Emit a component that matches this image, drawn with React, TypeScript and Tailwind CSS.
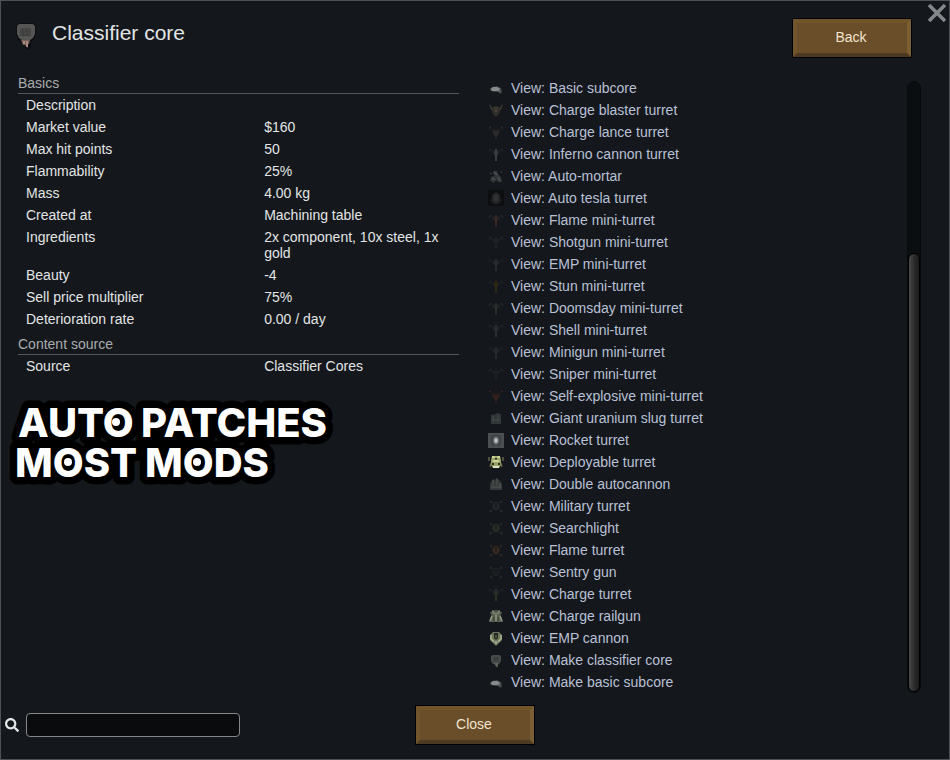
import { useState } from 'react';
import type { ReactNode } from 'react';
import { FaSearch } from 'react-icons/fa';

type Shape =
  | 'subcore' | 'core' | 'blaster' | 'lance' | 'mini' | 'mortar' | 'tesla' | 'slug'
  | 'rocket' | 'deployable' | 'autocannon' | 'quad' | 'railgun' | 'emp';

type Item = { label: string; shape: Shape; tint?: string };

const stats = [
  { label: 'Description', value: '' },
  { label: 'Market value', value: '$160' },
  { label: 'Max hit points', value: '50' },
  { label: 'Flammability', value: '25%' },
  { label: 'Mass', value: '4.00 kg' },
  { label: 'Created at', value: 'Machining table' },
  { label: 'Ingredients', value: '2x component, 10x steel, 1x gold' },
  { label: 'Beauty', value: '-4' },
  { label: 'Sell price multiplier', value: '75%' },
  { label: 'Deterioration rate', value: '0.00 / day' },
];

const items: Item[] = [
  { label: 'Basic subcore', shape: 'subcore' },
  { label: 'Charge blaster turret', shape: 'blaster' },
  { label: 'Charge lance turret', shape: 'lance', tint: '#2c2b2a' },
  { label: 'Inferno cannon turret', shape: 'mini', tint: '#3a3e3e' },
  { label: 'Auto-mortar', shape: 'mortar' },
  { label: 'Auto tesla turret', shape: 'tesla' },
  { label: 'Flame mini-turret', shape: 'mini', tint: '#332623' },
  { label: 'Shotgun mini-turret', shape: 'mini', tint: '#1f2224' },
  { label: 'EMP mini-turret', shape: 'mini', tint: '#272c2f' },
  { label: 'Stun mini-turret', shape: 'mini', tint: '#2c2813' },
  { label: 'Doomsday mini-turret', shape: 'mini', tint: '#292b2a' },
  { label: 'Shell mini-turret', shape: 'mini', tint: '#292d2f' },
  { label: 'Minigun mini-turret', shape: 'mini', tint: '#272a2b' },
  { label: 'Sniper mini-turret', shape: 'mini', tint: '#1c2022' },
  { label: 'Self-explosive mini-turret', shape: 'lance', tint: '#352020' },
  { label: 'Giant uranium slug turret', shape: 'slug' },
  { label: 'Rocket turret', shape: 'rocket' },
  { label: 'Deployable turret', shape: 'deployable' },
  { label: 'Double autocannon', shape: 'autocannon' },
  { label: 'Military turret', shape: 'quad', tint: '#232729' },
  { label: 'Searchlight', shape: 'quad', tint: '#2b2a26' },
  { label: 'Flame turret', shape: 'quad', tint: '#35271d' },
  { label: 'Sentry gun', shape: 'quad', tint: '#1d2022' },
  { label: 'Charge turret', shape: 'mini', tint: '#2b2e28' },
  { label: 'Charge railgun', shape: 'railgun' },
  { label: 'EMP cannon', shape: 'emp' },
  { label: 'Make classifier core', shape: 'core' },
  { label: 'Make basic subcore', shape: 'subcore' },
];

function drawShape(shape: Shape, tint: string): ReactNode {
  switch (shape) {
    case 'subcore':
      return (
        <>
          <path d="M2 9 L4 7 L9 6 L13 8 L14 11 L13 14 L10 12 L7 12 L3 11Z" fill="#3d4143" />
          <path d="M2.5 9 L5 7 L9 7 L12 8.5 L11 11 L8 11 L4 11Z" fill="#868a8b" />
          <path d="M9 11 L12 10 L13 13Z" fill="#5b5f60" />
        </>
      );
    case 'core':
      return (
        <>
          <path d="M3 4 L5 3 H11 L13 4 V9 L11 12 H5 L3 9Z" fill="#474b4a" />
          <path d="M5 6 H11 M5 8 H11 M8 5 V10" stroke="#343838" strokeWidth="1" />
          <path d="M6 11 H10 L10 14 L8.5 15.5Z" fill="#64605c" />
        </>
      );
    case 'blaster':
      return (
        <>
          <path d="M3 6 L8 4 L13 6 L11 12 L8 15 L5 12Z" fill="#302e29" />
          <path d="M2 3 L4 8 M14 3 L12 8 M6 5 L8 7 L10 5" stroke="#3d3b34" strokeWidth="1.3" fill="none" />
          <circle cx="8" cy="9" r="1.6" fill="#444036" />
        </>
      );
    case 'lance':
      return (
        <>
          <path d="M4 5 L8 7 L12 5 L10 11 L8 13 L6 11Z" fill={tint} />
          <path d="M1 4 L3 3 M15 4 L13 3 M8 12 V15" stroke={tint} strokeWidth="1.4" />
        </>
      );
    case 'mini':
      return (
        <>
          <path d="M7 3 H9 L10 7 L9 10 V15 H7 V10 L6 7Z" fill={tint} />
          <path d="M1 5 L3 3 M15 5 L13 3 M4 5 L6 7 M12 5 L10 7" stroke="#24282a" strokeWidth="1.2" />
        </>
      );
    case 'mortar':
      return (
        <>
          <path d="M5 3 L9 3 L11 7 L13 9 L14 14 H10 L8 12 L6 15 L2 13 L3 9 L6 8Z" fill="#303436" />
          <path d="M6 4 L9 7 M4 10 L7 12 M10 9 L12 13" stroke="#515554" strokeWidth="1.3" />
          <path d="M13 3 L14 5 M2 5 L4 6" stroke="#454948" strokeWidth="1" />
        </>
      );
    case 'tesla':
      return (
        <>
          <rect x="0" y="0" width="16" height="16" rx="2" fill="#0c0e10" />
          <path d="M4 5 L8 2 L12 5 L13 11 L10 14 H6 L3 11Z" fill="#222325" />
          <ellipse cx="8" cy="8" rx="2.5" ry="4" fill="#303033" />
        </>
      );
    case 'slug':
      return (
        <>
          <path d="M3 5 L6 4 V14 H3Z M6 5 L9 3 L13 4 V14 H6Z" fill="#303536" />
          <path d="M5 6 V12 M10 5 V12 M4 10 H12" stroke="#434847" strokeWidth="1" />
        </>
      );
    case 'rocket':
      return (
        <>
          <rect x="0" y="1" width="16" height="15" fill="#4b4f52" />
          <rect x="3" y="3" width="10" height="11" rx="2" fill="#3d4043" />
          <ellipse cx="8" cy="8.5" rx="3.2" ry="4.2" fill="#66696b" />
          <ellipse cx="8" cy="8.5" rx="1.6" ry="2.6" fill="#c2c5c2" />
        </>
      );
    case 'deployable':
      return (
        <>
          <path d="M4 2 H12 L13 6 L13 11 L11 14 H5 L3 11 L3 6Z" fill="#9ba36b" />
          <path d="M1 3 V7 M15 3 V7 M3 9 L2 13 M13 9 L14 13" stroke="#6b704e" strokeWidth="1.3" />
          <path d="M4 3 H7 M9 3 H12 M5 7 H11" stroke="#dbe2a5" strokeWidth="1.6" />
          <path d="M4 9 H6 V11 H4Z M10 9 H12 V11 H10Z M7 4 H9 V5.5 H7Z" fill="#2d3323" />
          <path d="M5 13 H11" stroke="#eceeda" strokeWidth="1.6" />
        </>
      );
    case 'autocannon':
      return (
        <>
          <path d="M2 8 L4 5 L5 3 H6 L7 5 L8 2 L10 3 L12 5 L14 8 V14 H2Z" fill="#363a3b" />
          <path d="M5 4 V9 M9 3 V9 M12 7 V12 M3 11 H13" stroke="#505453" strokeWidth="1" />
        </>
      );
    case 'quad':
      return (
        <>
          <path d="M2 3 L4 5 M14 3 L12 5 M2 14 L4 12 M14 14 L12 12" stroke="#2b2e30" strokeWidth="1.5" />
          <path d="M6 4 H10 L12 8 L10 12 H6 L4 8Z" fill={tint} />
          <path d="M8 5 V10" stroke="#15191c" strokeWidth="1" />
        </>
      );
    case 'railgun':
      return (
        <>
          <path d="M4 3 H12 L13 8 L15 14 H1 L3 8Z" fill="#59604f" />
          <path d="M4 3 H12 L10 6 H6Z M2 5 H4 M12 5 H14" fill="#7d8371" stroke="#7d8371" strokeWidth="1" />
          <path d="M4 8 L2 13 M12 8 L14 13 M8 7 V13" stroke="#969b86" strokeWidth="1.4" />
          <path d="M6 9 V13 M10 9 V13 M6 4 H10" stroke="#343931" strokeWidth="1" />
        </>
      );
    case 'emp':
      return (
        <>
          <path d="M5 2 L2 5 L2 10 L6 14 L8 16 L10 14 L14 10 L14 5 L11 2Z" fill="#6f765d" />
          <path d="M3 5 L3 9 L6 12 M13 5 L13 9 L10 12 M8 11 V14" stroke="#adb391" strokeWidth="1.5" fill="none" />
          <path d="M6 3 H10 V8 L8 10 L6 8Z" fill="#1f261f" />
          <path d="M8 5 V8" stroke="#78804f" strokeWidth="1" />
        </>
      );
  }
}

function ItemIcon({ shape, tint = '#303435' }: { shape: Shape; tint?: string }) {
  return (
    <svg viewBox="0 0 16 16" className="h-4 w-4 shrink-0" aria-hidden="true">
      {drawShape(shape, tint)}
    </svg>
  );
}

function WoodButton({ children }: { children: ReactNode }) {
  return (
    <button
      type="button"
      className="h-[38px] w-[118px] border-4 border-t-[#715528] border-r-[#7c5e35] border-b-[#4c3a22] border-l-[#71552c] bg-[#694e29] pr-0.5 pb-0.5 text-[14px] text-[#f2e4d0] outline outline-black hover:bg-[#775a32]"
    >
      {children}
    </button>
  );
}

function Section({ title, rows }: { title: string; rows: { label: string; value: string }[] }) {
  return (
    <section>
      <h2 className="border-b border-[#50565a] pt-0.5 text-[14px] leading-[19px] text-[#a9acae]">{title}</h2>
      <div className="pl-2">
        <table className="w-full table-fixed text-left leading-4">
          <tbody>
            {rows.map((row) => (
              <tr key={row.label} className="align-top hover:bg-white/5">
                <th scope="row" className="w-[55%] py-[3px] font-normal">{row.label}</th>
                <td className="py-[3px]">{row.value}</td>
              </tr>
            ))}
          </tbody>
        </table>
      </div>
    </section>
  );
}

// Outlined lettering with a dot inside each O
function Banner() {
  return (
    <svg
      width="330"
      height="90"
      viewBox="0 0 330 90"
      className="mt-[22px] -ml-2 overflow-visible fill-white stroke-black font-['Inter',sans-serif] text-[40px] font-extrabold [paint-order:stroke]"
      strokeWidth="15"
      strokeLinejoin="round"
    >
      <text x="8" y="38">AUTO</text>
      <text x="131" y="38">PATCHES</text>
      <text x="5" y="78">MOST</text>
      <text x="135" y="78">MODS</text>
      <g stroke="none">
        <circle cx="106" cy="23" r="4" />
        <circle cx="58" cy="63" r="4" />
        <circle cx="187" cy="63" r="4" />
      </g>
    </svg>
  );
}

export default function App() {
  const [query, setQuery] = useState('');

  return (
    <div className="relative flex min-h-screen flex-col border border-[#4c5257] bg-[#14181c] font-['Liberation_Sans',Arial,sans-serif] text-[14px] text-[#e2e4e5]">
      <button type="button" aria-label="Close window" className="absolute top-[3px] right-[3px] text-[#85888a] hover:text-white">
        <svg viewBox="0 0 18 18" className="size-[18px]" aria-hidden="true">
          <path d="M1 1 L17 17 M17 1 L1 17" stroke="currentColor" strokeWidth="3.5" />
        </svg>
      </button>

      <header className="flex items-start justify-between pt-[18px] pr-[38px] pb-[15px] pl-[15px]">
        <div className="flex items-start gap-4">
          <svg viewBox="0 0 20 32" className="h-8 w-5" aria-hidden="true">
            <path d="M0 7 L3 4 H17 L20 7 V15 L18 20 L15 23 V28 L12 31 L9 28 L5 23 L2 20 L0 15Z" fill="#0b0d0f" />
            <path d="M1 7 L3 5 H17 L19 7 V15 L17 19 L13 22 H7 L3 19 L1 15Z" fill="#555554" />
            <path d="M4 10 H15 V17 H4Z" fill="#484948" />
            <path d="M4 10 H15 M4 13 H15 M4 16 H15 M7 10 V17 M11 10 V17" stroke="#3a3c3c" strokeWidth="1" />
            <path d="M5 21 H14 L13 25 H12 V29 L9 26 H7Z" fill="#74605a" />
            <path d="M8 22 V25 M11 22 V28" stroke="#b8978c" strokeWidth="1.5" />
          </svg>
          <h1 className="text-[21px] leading-7">Classifier core</h1>
        </div>
        <WoodButton>Back</WoodButton>
      </header>

      <main className="grid grow grid-cols-[441fr_433fr] gap-[29px] pr-7 pl-[17px]">
        <div>
          <div className="flex flex-col gap-[3px]">
            <Section title="Basics" rows={stats} />
            <Section title="Content source" rows={[{ label: 'Source', value: 'Classifier Cores' }]} />
          </div>
          <Banner />
        </div>

        <div className="flex justify-between pt-[5px]">
          <ul>
            {items.map((item) => (
              <li key={item.label}>
                <a href="#" className="flex h-[22px] items-center gap-[7px] text-[#b9c0d6] hover:text-white">
                  <ItemIcon shape={item.shape} tint={item.tint} />
                  View: {item.label}
                </a>
              </li>
            ))}
          </ul>
          <div className="mt-1 flex w-[14px] flex-col justify-end rounded-full border border-[#080a0c] bg-[#0b0e10]">
            <div className="h-[72%] rounded-md border border-black bg-linear-to-r from-[#4a4a4a] via-[#2c2c2c] to-[#1b1b1b]" />
          </div>
        </div>
      </main>

      <footer className="grid grid-cols-[1fr_auto_1fr] items-center pt-[13px] pb-[15px]">
        <label className="flex items-center gap-[7px] pl-1">
          <FaSearch className="size-[14px] text-[#e4e6e7]" aria-hidden="true" />
          <input
            type="text"
            aria-label="Search"
            value={query}
            onChange={(e) => setQuery(e.target.value)}
            className="h-6 w-[214px] rounded border border-[#85888a] bg-[#0a0b0d] px-2 outline-none"
          />
        </label>
        <WoodButton>Close</WoodButton>
      </footer>
    </div>
  );
}
